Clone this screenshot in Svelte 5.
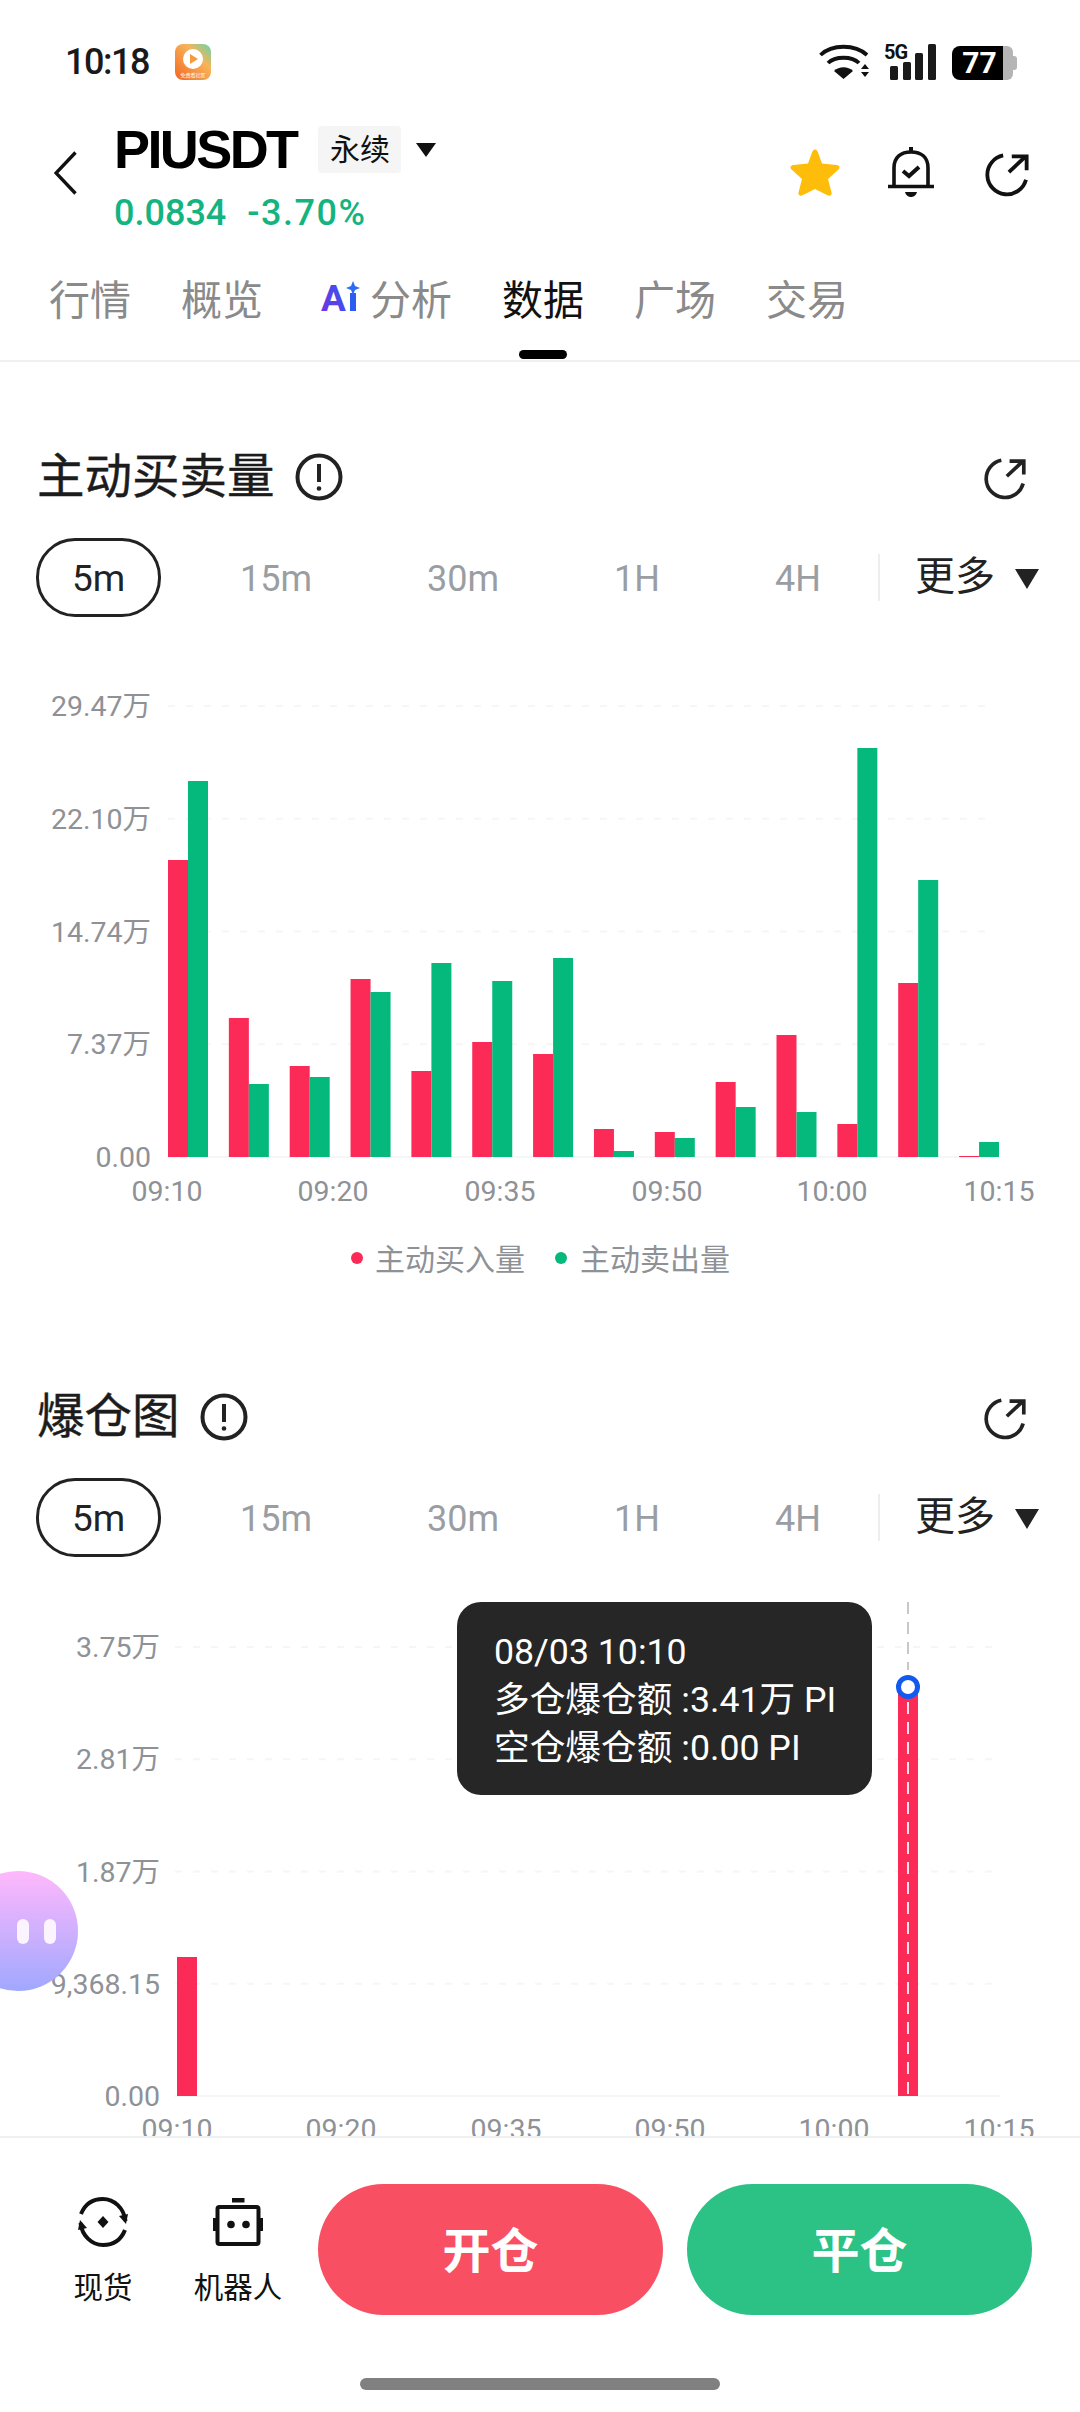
<script>
	const tabs = ['行情', '概览', '分析', '数据', '广场', '交易'];
	const periods = ['15m', '30m', '1H', '4H'];

	// page y of each bar top, [buy, sell]
	const flow = [
		[860, 781], [1018, 1084], [1066, 1077], [979, 992], [1071, 963], [1042, 981], [1054, 958],
		[1129, 1151], [1132, 1138], [1082, 1107], [1035, 1112], [1124, 748], [983, 880], [1156, 1142]
	];
	const flowTop = 617;
	const flowBase = 1157 - flowTop;
	const flowTicks = ['29.47万', '22.10万', '14.74万', '7.37万', '0.00'];
	const flowTimes = [['09:10', 167], ['09:20', 333], ['09:35', 500], ['09:50', 667], ['10:00', 832], ['10:15', 999]];

	const liqTop = 1557;
	const liqBase = 2096 - liqTop;
	const liqTicks = ['3.75万', '2.81万', '1.87万', '9,368.15', '0.00'];
	const liqTimes = [['09:10', 177], ['09:20', 341], ['09:35', 506], ['09:50', 670], ['10:00', 834], ['10:15', 999]];
</script>

{#snippet shareIcon(cls)}
	<svg class={cls} viewBox="0 0 48 48" fill="none" stroke="currentColor" stroke-width="4">
		<path d="M20 3.600A20.500 20.500 0 1 0 43.800 29" />
		<path d="M26 21 43 5M29 4.500H44.500V19" />
	</svg>
{/snippet}

{#snippet sectionHead(title)}
	<div class="sec-head">
		<span class="sec-title">{title}</span>
		<svg class="info" viewBox="0 0 48 48" fill="none" stroke="#222" stroke-width="4">
			<circle cx="24" cy="24" r="21.500" />
			<path d="M24 11V29" />
			<circle cx="24" cy="35.500" r="1.600" fill="#222" stroke-width="1.500" />
		</svg>
		{@render shareIcon('sec-share')}
	</div>
	<div class="periods">
		<span class="pill">5m</span>
		{#each periods as p}
			<span class="period">{p}</span>
		{/each}
		<span class="divider"></span>
		<span class="more">更多</span>
		<span class="more-caret"></span>
	</div>
{/snippet}

<div class="page">
	<div class="status">
		<div class="status-left">
			<span class="time">10:18</span>
			<svg class="app-icon" viewBox="0 0 36 36">
				<defs>
					<linearGradient id="appBg" x1="1" y1="0" x2="0" y2="1">
						<stop offset="0" stop-color="#62d6ae" />
						<stop offset="0.35" stop-color="#f7b45a" />
						<stop offset="1" stop-color="#f4661f" />
					</linearGradient>
				</defs>
				<rect width="36" height="36" rx="8" fill="url(#appBg)" />
				<circle cx="18" cy="15" r="10" fill="#fff" />
				<path d="M15 10L23 15L15 20Z" fill="#f79a3e" />
				<text x="18" y="33" class="app-label">免费看社区</text>
			</svg>
		</div>
		<div class="status-right">
			<svg class="wifi" viewBox="0 0 50 35" fill="none" stroke="#111" stroke-width="3.800">
				<path d="M1.500 11C13 0 36 0 48 11" />
				<path d="M9 19C16 12 33 12 40 19" />
				<path d="M24.500 35L15 27C20 22 29 22 34 27Z" fill="#111" stroke="none" />
				<path d="M46 20L50 25H42ZM42 28H50L46 33Z" fill="#111" stroke="none" />
			</svg>
			<div class="signal">
				<span class="five-g">5G</span>
				<i style="height:14px"></i><i style="height:18px"></i><i style="height:27px"></i><i style="height:36px"></i>
			</div>
			<div class="battery"><span class="battery-fill">77</span><span class="battery-rest"></span><span class="battery-nub"></span></div>
		</div>
	</div>

	<header class="head">
		<svg class="back" viewBox="0 0 23 44" fill="none" stroke="#111" stroke-width="3.400">
			<path d="M21.500 1.500L2 22L21.500 42.500" />
		</svg>
		<div class="symbol">
			<div class="symbol-top">
				<span class="pair">PIUSDT</span>
				<span class="badge">永续</span>
				<span class="caret"></span>
			</div>
			<div class="quote">
				<span>0.0834</span>
				<span class="pct">-3.70%</span>
			</div>
		</div>
		<div class="actions">
			<svg class="star" viewBox="0 0 50 48">
				<path d="M25 1.500C26.500 1.500 27.500 3 28 4.500L32 15.500L46.500 17C49.500 17.500 50.500 19.500 48.500 21.500L38 31L41.500 44.500C42 47 40 48.500 37.500 47.300L25 41L12.500 47.300C10 48.500 8 47 8.500 44.500L12 31L1.500 21.500C-.5 19.500.5 17.500 3.500 17L18 15.500L22 4.500C22.500 3 23.500 1.500 25 1.500Z" fill="#fdbd0a" />
			</svg>
			<svg class="bell" viewBox="0 0 46 50" fill="none" stroke="#111" stroke-width="3.600">
				<path d="M6 38V21C6 10 13 5 23 5S40 10 40 21V38" />
				<path d="M0 39.500H46" />
				<path d="M21 0H25V4H21Z" fill="#111" stroke="none" />
				<path d="M17 45H29C28 49 25 50 23 50S18 49 17 45Z" fill="#111" stroke="none" />
				<path d="M15 24L21 29L31 20" stroke-width="4" />
			</svg>
			{@render shareIcon('top-share')}
		</div>
	</header>

	<nav class="tabs">
		{#each tabs as tab, i}
			<div class="tab" class:active={i === 3}>
				{#if tab === '分析'}
					<svg class="ai" viewBox="0 0 40 32">
						<defs>
							<linearGradient id="aiGrad" x1="0" y1="1" x2="1" y2="0">
								<stop offset="0" stop-color="#7a2fe0" />
								<stop offset="1" stop-color="#2a5cf2" />
							</linearGradient>
						</defs>
						<text x="1" y="30" class="ai-a" fill="url(#aiGrad)">A</text>
						<rect x="30" y="12" width="6" height="18" fill="#2a5cf2" />
						<path d="M33 0L35 5L40 7L35 9L33 14L31 9L26 7L31 5Z" fill="#2a6cf5" />
					</svg>
				{/if}
				{tab}
			</div>
		{/each}
	</nav>

	<main class="content">
		<section class="sec">
			{@render sectionHead('主动买卖量')}
			<svg class="chart flow-chart" viewBox="0 0 1080 685">
				{#each flowTicks as tick, i}
					{@const y = 706 + i * 112.75 - flowTop}
					<line class="grid" class:solid={i === 4} x1="168" x2="995" y1={y} y2={y} />
					<text class="tick" x="151" y={y + 10} text-anchor="end">{tick}</text>
				{/each}
				{#each flow as bar, i}
					{@const x = 168 + i * 60.85}
					<rect x={x} y={bar[0] - flowTop} width="20" height={flowBase - bar[0] + flowTop} fill="#fb2a57" />
					<rect x={x + 20} y={bar[1] - flowTop} width="20" height={flowBase - bar[1] + flowTop} fill="#05b97c" />
				{/each}
				{#each flowTimes as t}
					<text class="tick" x={t[1]} y={1201 - flowTop} text-anchor="middle">{t[0]}</text>
				{/each}
				<circle cx="357" cy={1258 - flowTop} r="6" fill="#fb2a57" />
				<text class="legend" x="375" y={1270 - flowTop}>主动买入量</text>
				<circle cx="561" cy={1258 - flowTop} r="6" fill="#05b97c" />
				<text class="legend" x="580" y={1270 - flowTop}>主动卖出量</text>
			</svg>
		</section>

		<section class="sec">
			{@render sectionHead('爆仓图')}
			<div class="chart-wrap">
				<svg class="chart liq-chart" viewBox="0 0 1080 600">
					{#each liqTicks as tick, i}
						{@const y = 1647 + i * 112.25 - liqTop}
						<line class="grid" class:solid={i === 4} x1="175" x2="1000" y1={y} y2={y} />
						<text class="tick" x="160" y={y + 10} text-anchor="end">{tick}</text>
					{/each}
					<rect x="177" y={1957 - liqTop} width="20" height={2096 - 1957} fill="#fb2a57" />
					<rect x="898" y={1687 - liqTop} width="20" height={2096 - 1687} fill="#fb2a57" />
					<line x1="908" x2="908" y1={1602 - liqTop} y2={1670 - liqTop} class="cross" />
					<line x1="908" x2="908" y1={1702 - liqTop} y2={liqBase} class="cross on-bar" />
					<circle cx="908" cy={1687 - liqTop} r="9.500" fill="#fff" stroke="#1259f0" stroke-width="5" />
					{#each liqTimes as t}
						<text class="tick" x={t[1]} y={2139 - liqTop} text-anchor="middle">{t[0]}</text>
					{/each}
				</svg>
				<div class="tooltip">
					<div>08/03 10:10</div>
					<div>多仓爆仓额 :3.41万 PI</div>
					<div>空仓爆仓额 :0.00 PI</div>
				</div>
			</div>
		</section>
	</main>

	<div class="bubble"><i></i><i></i></div>

	<footer class="bottom">
		<div class="bottom-row">
			<div class="tool">
				<svg class="tool-icon" viewBox="0 0 50 50" fill="none" stroke="#111" stroke-width="4">
					<path d="M3 17C7 7 15 2 25 2C36 2 46 11 47.500 24" />
					<path d="M47 33C43 43 35 48 25 48C14 48 4 39 2.500 26" />
					<path d="M41 19L48 27L50 17ZM9 31L2 23L0 33Z" fill="#111" stroke="none" />
					<path d="M25 19L30.500 25L25 31L19.500 25Z" fill="#111" stroke="none" />
				</svg>
				<span>现货</span>
			</div>
			<div class="tool">
				<svg class="tool-icon" viewBox="0 0 50 48" fill="none" stroke="#111" stroke-width="4">
					<rect x="4.500" y="9" width="41" height="37" rx="2" />
					<path d="M19 0H31.500V4.500H19Z" fill="#111" stroke="none" />
					<path d="M0 20H3V33H0ZM47 20H50V33H47Z" fill="#111" stroke="none" />
					<circle cx="18" cy="26.500" r="3.800" fill="#111" stroke="none" />
					<circle cx="33" cy="26.500" r="3.800" fill="#111" stroke="none" />
				</svg>
				<span>机器人</span>
			</div>
			<button class="trade open">开仓</button>
			<button class="trade close">平仓</button>
		</div>
		<div class="home-bar"></div>
	</footer>
</div>

<style>
	:global(body) {
		margin: 0;
		background: #fff;
	}

	.page {
		position: relative;
		width: 1080px;
		height: 2412px;
		display: flex;
		flex-direction: column;
		overflow: hidden;
		background: #fff;
		color: #111;
		font-family: Roboto, 'Noto Sans CJK SC', sans-serif;
	}

	/* status bar */
	.status {
		flex: none;
		height: 126px;
		box-sizing: border-box;
		padding: 44px 63px 0 65px;
		display: flex;
		justify-content: space-between;
		align-items: flex-start;
	}

	.status-left {
		display: flex;
		align-items: center;
		gap: 26px;
		height: 36px;
	}

	.time {
		font-size: 36px;
		font-weight: 500;
		line-height: 36px;
		letter-spacing: -1.500px;
		color: #1a1a1a;
	}

	.app-icon {
		width: 36px;
		height: 36px;
	}

	.app-label {
		font-size: 5px;
		fill: #fff;
		text-anchor: middle;
	}

	.status-right {
		display: flex;
		align-items: flex-start;
		height: 36px;
	}

	.wifi {
		width: 50px;
		height: 35px;
	}

	.signal {
		position: relative;
		width: 46px;
		height: 36px;
		margin-left: 21px;
		display: flex;
		align-items: flex-end;
		gap: 4.500px;
	}

	.signal i {
		display: block;
		width: 8px;
		border-radius: 1.500px;
		background: #1a1a1a;
	}

	.five-g {
		position: absolute;
		left: -6px;
		top: -2px;
		font-size: 20px;
		font-weight: 700;
		line-height: 20px;
		letter-spacing: -1px;
	}

	.battery {
		margin: 2px 0 0 16px;
		display: flex;
		align-items: center;
		height: 34px;
	}

	.battery-fill {
		width: 51px;
		height: 34px;
		border-radius: 8px 0 0 8px;
		background: #000;
		color: #fff;
		font-size: 30px;
		font-weight: 700;
		line-height: 34px;
		text-align: center;
		padding-left: 4px;
		box-sizing: border-box;
	}

	.battery-rest {
		width: 10px;
		height: 34px;
		border-radius: 0 6px 6px 0;
		background: #b5b5b5;
	}

	.battery-nub {
		width: 4px;
		height: 14px;
		border-radius: 0 3px 3px 0;
		background: #b5b5b5;
	}

	/* symbol header */
	.head {
		flex: none;
		height: 132px;
		box-sizing: border-box;
		padding-left: 54px;
		display: flex;
		align-items: flex-start;
	}

	.back {
		width: 23px;
		height: 44px;
		margin-top: 25px;
	}

	.symbol {
		margin-left: 37px;
	}

	.symbol-top {
		display: flex;
		align-items: center;
		height: 47px;
	}

	.pair {
		font-size: 54px;
		font-weight: 700;
		line-height: 45px;
		font-family: 'Liberation Sans', sans-serif;
		letter-spacing: -2.600px;
		color: #000;
	}

	.badge {
		margin-left: 22px;
		width: 83px;
		height: 47px;
		border-radius: 4px;
		background: #f5f5f5;
		font-size: 30px;
		line-height: 47px;
		text-align: center;
	}

	.caret {
		margin-left: 15px;
		width: 0;
		height: 0;
		border-left: 10px solid transparent;
		border-right: 10px solid transparent;
		border-top: 14px solid #111;
	}

	.quote {
		margin-top: 22px;
		display: flex;
		gap: 21px;
		font-size: 36px;
		font-weight: 500;
		line-height: 36px;
		color: #13b47f;
	}

	.pct {
		letter-spacing: 1.500px;
	}

	.actions {
		position: relative;
		margin-left: auto;
		margin-right: 50px;
		margin-top: 21px;
		display: flex;
		align-items: flex-start;
	}

	.star {
		width: 50px;
		height: 48px;
		margin-top: 1px;
	}

	.bell {
		width: 46px;
		height: 50px;
		margin-left: 48px;
	}

	.actions :global(.top-share) {
		width: 46px;
		height: 46px;
		margin: 5px 0 0 50px;
		color: #111;
	}

	/* tabs */
	.tabs {
		flex: none;
		height: 104px;
		box-sizing: border-box;
		padding-left: 49px;
		display: flex;
		gap: 50px;
		border-bottom: 2px solid #f0f0f0;
	}

	.tab {
		position: relative;
		display: flex;
		align-items: center;
		height: 78px;
		font-size: 41px;
		color: #8a8a8a;
	}

	.tab.active {
		color: #111;
	}

	.tab.active::after {
		content: '';
		position: absolute;
		left: 50%;
		top: 92px;
		width: 48px;
		height: 9px;
		margin-left: -24px;
		border-radius: 5px;
		background: #000;
	}

	.ai {
		width: 40px;
		height: 32px;
		margin: 0 10px 0 7px;
		overflow: visible;
	}

	.ai-a {
		font-family: Roboto, sans-serif;
		font-size: 37px;
		font-weight: 700;
	}

	/* sections */
	.content {
		flex: 1;
		min-height: 0;
		overflow: hidden;
	}

	.sec-head {
		margin-top: 85px;
		height: 60px;
		padding: 0 53px 0 37px;
		display: flex;
		align-items: center;
	}

	.sec-title {
		font-size: 47.500px;
		font-weight: 400;
		line-height: 60px;
		color: #1c1c1c;
		-webkit-text-stroke: 0.4px #1c1c1c;
	}

	.info {
		width: 48px;
		height: 48px;
		margin-left: 20px;
	}

	.sec-head :global(.sec-share) {
		width: 44px;
		height: 44px;
		margin: 4px 0 0 auto;
		color: #222;
	}

	.periods {
		margin-top: 31px;
		height: 79px;
		padding-left: 36px;
		display: flex;
		align-items: center;
		gap: 115px;
		color: #9a9ea3;
		font-size: 36px;
	}

	.period {
		padding-top: 3px;
	}

	.pill {
		width: 125px;
		height: 79px;
		margin-right: -36px;
		box-sizing: border-box;
		border: 3px solid #222;
		border-radius: 39px;
		color: #222;
		font-size: 37px;
		line-height: 76px;
		text-align: center;
	}

	.divider {
		width: 2px;
		height: 47px;
		margin: 0 -80px 0 -58px;
		background: #eee;
	}

	.more {
		margin-right: -95px;
		font-size: 40px;
		line-height: 40px;
		padding-bottom: 1px;
		color: #222;
	}

	.more-caret {
		width: 0;
		height: 0;
		margin-top: 3px;
		border-left: 12px solid transparent;
		border-right: 12px solid transparent;
		border-top: 20px solid #222;
	}

	.chart {
		display: block;
		width: 1080px;
	}

	.flow-chart {
		height: 685px;
	}

	.liq-chart {
		height: 600px;
	}

	.chart-wrap {
		position: relative;
	}

	.grid {
		stroke: #f6f6f6;
		stroke-width: 2;
		stroke-dasharray: 7 11;
	}

	.grid.solid {
		stroke: #f6f6f6;
		stroke-dasharray: none;
	}

	.tick {
		font-size: 28.500px;
		fill: #8e9196;
	}

	.legend {
		font-size: 30px;
		fill: #8e9196;
	}

	.cross {
		stroke: #c8c8c8;
		stroke-width: 2;
		stroke-dasharray: 12 8;
	}

	.cross.on-bar {
		stroke: #ffe3e8;
	}

	.tooltip {
		position: absolute;
		left: 457px;
		top: 45px;
		width: 415px;
		height: 193px;
		box-sizing: border-box;
		padding: 26px 37px;
		border-radius: 24px;
		background: #262626;
		color: #fff;
		font-size: 35.700px;
		line-height: 48px;
		white-space: nowrap;
	}

	.bubble {
		position: absolute;
		left: -42px;
		top: 1871px;
		width: 120px;
		height: 120px;
		border-radius: 50%;
		background: linear-gradient(#ffb8fc, #a0a8ff);
		display: flex;
		justify-content: flex-end;
		align-items: center;
		gap: 15px;
		padding-right: 22px;
		box-sizing: border-box;
	}

	.bubble i {
		width: 12px;
		height: 25px;
		border-radius: 6px;
		background: #fbf4ff;
	}

	/* bottom bar */
	.bottom {
		flex: none;
		height: 276px;
		box-sizing: border-box;
		border-top: 2px solid #f0f0f0;
		padding-top: 46px;
		background: #fff;
	}

	.bottom-row {
		display: flex;
		align-items: flex-start;
		padding-left: 50px;
	}

	.tool {
		width: 106px;
		margin-right: 29px;
		display: flex;
		flex-direction: column;
		align-items: center;
		font-size: 29.500px;
		color: #111;
	}

	.tool-icon {
		width: 50px;
		height: 50px;
		margin-top: 13px;
	}

	.tool span {
		margin-top: 21px;
		line-height: 40px;
	}

	.trade {
		width: 345px;
		height: 131px;
		border: none;
		border-radius: 66px;
		color: #fff;
		font-family: inherit;
		font-size: 48px;
		font-weight: 700;
		padding: 0 0 5px;
	}

	.open {
		margin-left: -2px;
		background: #f94f63;
	}

	.close {
		margin-left: 24px;
		background: #2cc285;
	}

	.home-bar {
		width: 360px;
		height: 12px;
		margin: 63px auto 0;
		border-radius: 6px;
		background: #808080;
	}
</style>
